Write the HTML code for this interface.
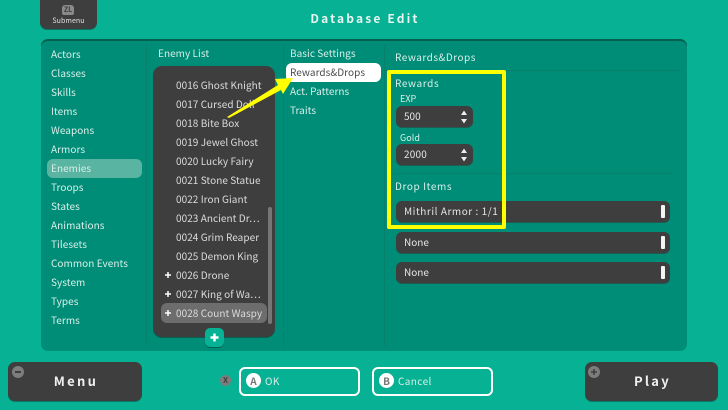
<!DOCTYPE html>
<html><head><meta charset="utf-8">
<style>
html,body{margin:0;padding:0}
body{width:728px;height:410px;overflow:hidden;background:#07b193;position:relative;font-family:"Noto Sans CJK JP","Liberation Sans",sans-serif;color:#d9efe9}
.a{position:absolute;white-space:nowrap}
.t{position:absolute;white-space:nowrap;font-size:10px;line-height:14px;letter-spacing:.05px;margin-top:-1px}
.dark{position:absolute;background:#3e3e3e;box-shadow:0 1px 0 #235a50}
.g{color:#dcdcdc;left:176px}
.line{position:absolute;background:#07806c}
.bar{position:absolute;left:661px;width:4px;height:13px;background:#f4f4f4;border-radius:1px}
</style></head><body>
<div class="dark" style="left:40px;top:-5px;width:57px;height:34px;border-radius:0 0 7px 7px;box-shadow:0 1px 0 #0a7463"></div>
<div class="a" style="left:62px;top:5px;width:12px;height:10px;background:#8a8a8a;border-radius:3px 3px 2px 2px"></div>
<div class="a" style="left:62px;top:4px;width:12px;height:11px;font-size:7px;line-height:12px;text-align:center;color:#3e3e3e;font-weight:700">ZL</div>
<div class="t" style="left:40px;width:57px;text-align:center;top:15px;font-size:7px;letter-spacing:.1px;color:#e0e0e0">Submenu</div>
<div class="t" style="left:265px;width:200px;text-align:center;top:11px;font-size:12px;letter-spacing:2.15px;font-weight:700;line-height:17px;color:#e6f5f1">Database Edit</div>

<div class="a" style="left:41px;top:39px;width:646px;height:312px;background:#008d78;border-radius:7px;box-shadow:inset 0 2px 0 #05604f"></div>
<div class="line" style="left:146px;top:45px;width:1px;height:301px"></div>
<div class="line" style="left:283px;top:45px;width:1px;height:301px"></div>
<div class="line" style="left:384px;top:45px;width:1px;height:301px"></div>
<div class="line" style="left:385px;top:70px;width:296px;height:1px"></div>
<div class="line" style="left:393px;top:173px;width:280px;height:1px"></div>

<div class="a" style="left:47px;top:159px;width:95px;height:19px;background:#5ab4a2;border-radius:6px"></div>
<div class="t" style="left:51px;top:48px">Actors</div>
<div class="t" style="left:51px;top:67px">Classes</div>
<div class="t" style="left:51px;top:86px">Skills</div>
<div class="t" style="left:51px;top:105px">Items</div>
<div class="t" style="left:51px;top:124px">Weapons</div>
<div class="t" style="left:51px;top:143px">Armors</div>
<div class="t" style="left:51px;top:162px">Enemies</div>
<div class="t" style="left:51px;top:181px">Troops</div>
<div class="t" style="left:51px;top:200px">States</div>
<div class="t" style="left:51px;top:219px">Animations</div>
<div class="t" style="left:51px;top:238px">Tilesets</div>
<div class="t" style="left:51px;top:257px">Common Events</div>
<div class="t" style="left:51px;top:276px">System</div>
<div class="t" style="left:51px;top:295px">Types</div>
<div class="t" style="left:51px;top:314px">Terms</div>

<div class="t" style="left:158px;top:47px">Enemy List</div>
<div class="dark" style="left:153px;top:66px;width:122px;height:271px;border-radius:9px;box-shadow:0 1px 0 #05604f"></div>
<div class="a" style="left:161px;top:303px;width:106px;height:20px;background:#6d6d6d;border-radius:6px"></div>
<div class="a" style="left:268px;top:207px;width:4px;height:117px;background:#767676;border-radius:2px"></div>
<div class="t g" style="top:79px">0016 Ghost Knight</div>
<div class="t g" style="top:98px">0017 Cursed Doll</div>
<div class="t g" style="top:117px">0018 Bite Box</div>
<div class="t g" style="top:136px">0019 Jewel Ghost</div>
<div class="t g" style="top:155px">0020 Lucky Fairy</div>
<div class="t g" style="top:174px">0021 Stone Statue</div>
<div class="t g" style="top:193px">0022 Iron Giant</div>
<div class="t g" style="top:212px">0023 Ancient Dr⋯</div>
<div class="t g" style="top:231px">0024 Grim Reaper</div>
<div class="t g" style="top:250px">0025 Demon King</div>
<div class="t g" style="top:269px">0026 Drone</div>
<div class="t g" style="top:288px">0027 King of Wa⋯</div>
<div class="t g" style="top:307px">0028 Count Waspy</div>
<svg class="a" style="left:164px;top:271px" width="8" height="46"><path d="M4 1v6M1 4h6M4 20v6M1 23h6M4 39v6M1 42h6" stroke="#fff" stroke-width="1.5"/></svg>
<div class="a" style="left:205px;top:328px;width:19px;height:19px;background:#07b193;border-radius:5px;box-shadow:0 1px 0 #05604f"></div>
<svg class="a" style="left:205px;top:328px" width="19" height="19"><path d="M9.5 5.5v8M5.5 9.5h8" stroke="#fff" stroke-width="2.4"/></svg>

<div class="a" style="left:286px;top:63px;width:95px;height:19px;background:#fff;border-radius:6px"></div>
<div class="t" style="left:290px;top:47px">Basic Settings</div>
<div class="t" style="left:290px;top:66px;color:#4a4a4a">Rewards&amp;Drops</div>
<div class="t" style="left:290px;top:85px">Act. Patterns</div>
<div class="t" style="left:290px;top:104px">Traits</div>

<div class="t" style="left:395px;top:51px;letter-spacing:.5px">Rewards&amp;Drops</div>
<div class="t" style="left:395px;top:77px;letter-spacing:.6px">Rewards</div>
<div class="t" style="left:400px;top:93px;font-size:9px">EXP</div>
<div class="dark" style="left:396px;top:106px;width:77px;height:21px;border-radius:6px"></div>
<div class="t" style="left:404px;top:110px;color:#e6e6e6;letter-spacing:0">500</div>
<svg class="a" style="left:460px;top:110px" width="8" height="14"><path d="M4 .5L7 5H1zM4 13.5L1 9h6z" fill="#eee"/></svg>
<div class="t" style="left:400px;top:132px;font-size:9px">Gold</div>
<div class="dark" style="left:396px;top:144px;width:77px;height:21px;border-radius:6px"></div>
<div class="t" style="left:404px;top:148px;color:#e6e6e6;letter-spacing:.2px">2000</div>
<svg class="a" style="left:460px;top:148px" width="8" height="14"><path d="M4 .5L7 5H1zM4 13.5L1 9h6z" fill="#eee"/></svg>
<div class="t" style="left:395px;top:180px;letter-spacing:.6px">Drop Items</div>

<div class="dark" style="left:396px;top:201px;width:274px;height:21px;border-radius:6px"></div>
<div class="dark" style="left:396px;top:232px;width:274px;height:21px;border-radius:6px"></div>
<div class="dark" style="left:396px;top:262px;width:274px;height:21px;border-radius:6px"></div>
<div class="bar" style="top:205px"></div><div class="bar" style="top:236px"></div><div class="bar" style="top:266px"></div>
<div class="t" style="left:404px;top:205px;color:#e6e6e6;letter-spacing:.55px">Mithril Armor : 1/1</div>
<div class="t" style="left:404px;top:236px;color:#e6e6e6;letter-spacing:0">None</div>
<div class="t" style="left:404px;top:266px;color:#e6e6e6;letter-spacing:0">None</div>

<div class="a" style="left:387px;top:70px;width:111px;height:151px;border:4px solid #ffff00;border-radius:2px"></div>
<svg class="a" style="left:0;top:0" width="728" height="410"><path d="M227 117L278 85L275 79L293 78L283 94L281 90L229 118Z" fill="#ffff00"/></svg>

<div class="dark" style="left:8px;top:362px;width:134px;height:39px;border-radius:7px;box-shadow:0 1px 0 #067a66"></div>
<div class="a" style="left:12px;top:366px;width:12px;height:12px;background:#7d7d7d;border-radius:50%"></div>
<div class="a" style="left:15px;top:371px;width:6px;height:1.5px;background:#3e3e3e"></div>
<div class="t" style="left:9px;width:134px;text-align:center;top:372px;font-size:13px;line-height:19px;font-weight:700;letter-spacing:2.3px;color:#f0f0f0">Menu</div>

<div class="dark" style="left:585px;top:362px;width:133px;height:39px;border-radius:7px;box-shadow:0 1px 0 #067a66"></div>
<div class="a" style="left:588px;top:366px;width:12px;height:12px;background:#7d7d7d;border-radius:50%"></div>
<svg class="a" style="left:588px;top:366px" width="12" height="12"><path d="M6 3v6M3 6h6" stroke="#3e3e3e" stroke-width="1.5"/></svg>
<div class="t" style="left:586px;width:133px;text-align:center;top:372px;font-size:13px;line-height:19px;font-weight:700;letter-spacing:2.3px;color:#f0f0f0">Play</div>

<div class="a" style="left:220px;top:375px;width:11px;height:11px;background:#7d7d7d;border-radius:50%;font-size:8px;line-height:11px;text-align:center;color:#3e3e3e;font-weight:700">X</div>
<div class="a" style="left:239px;top:367px;width:117px;height:25px;border:2px solid #fff;border-radius:6px"></div>
<div class="a" style="left:246px;top:373px;width:15px;height:15px;background:#fff;border-radius:50%;font-size:10px;line-height:15px;text-align:center;color:#777;font-weight:700">A</div>
<div class="t" style="left:265px;top:375px;letter-spacing:.4px">OK</div>
<div class="a" style="left:372px;top:367px;width:117px;height:25px;border:2px solid #fff;border-radius:6px"></div>
<div class="a" style="left:379px;top:373px;width:15px;height:15px;background:#fff;border-radius:50%;font-size:10px;line-height:15px;text-align:center;color:#777;font-weight:700">B</div>
<div class="t" style="left:398px;top:375px;letter-spacing:.4px">Cancel</div>
</body></html>
